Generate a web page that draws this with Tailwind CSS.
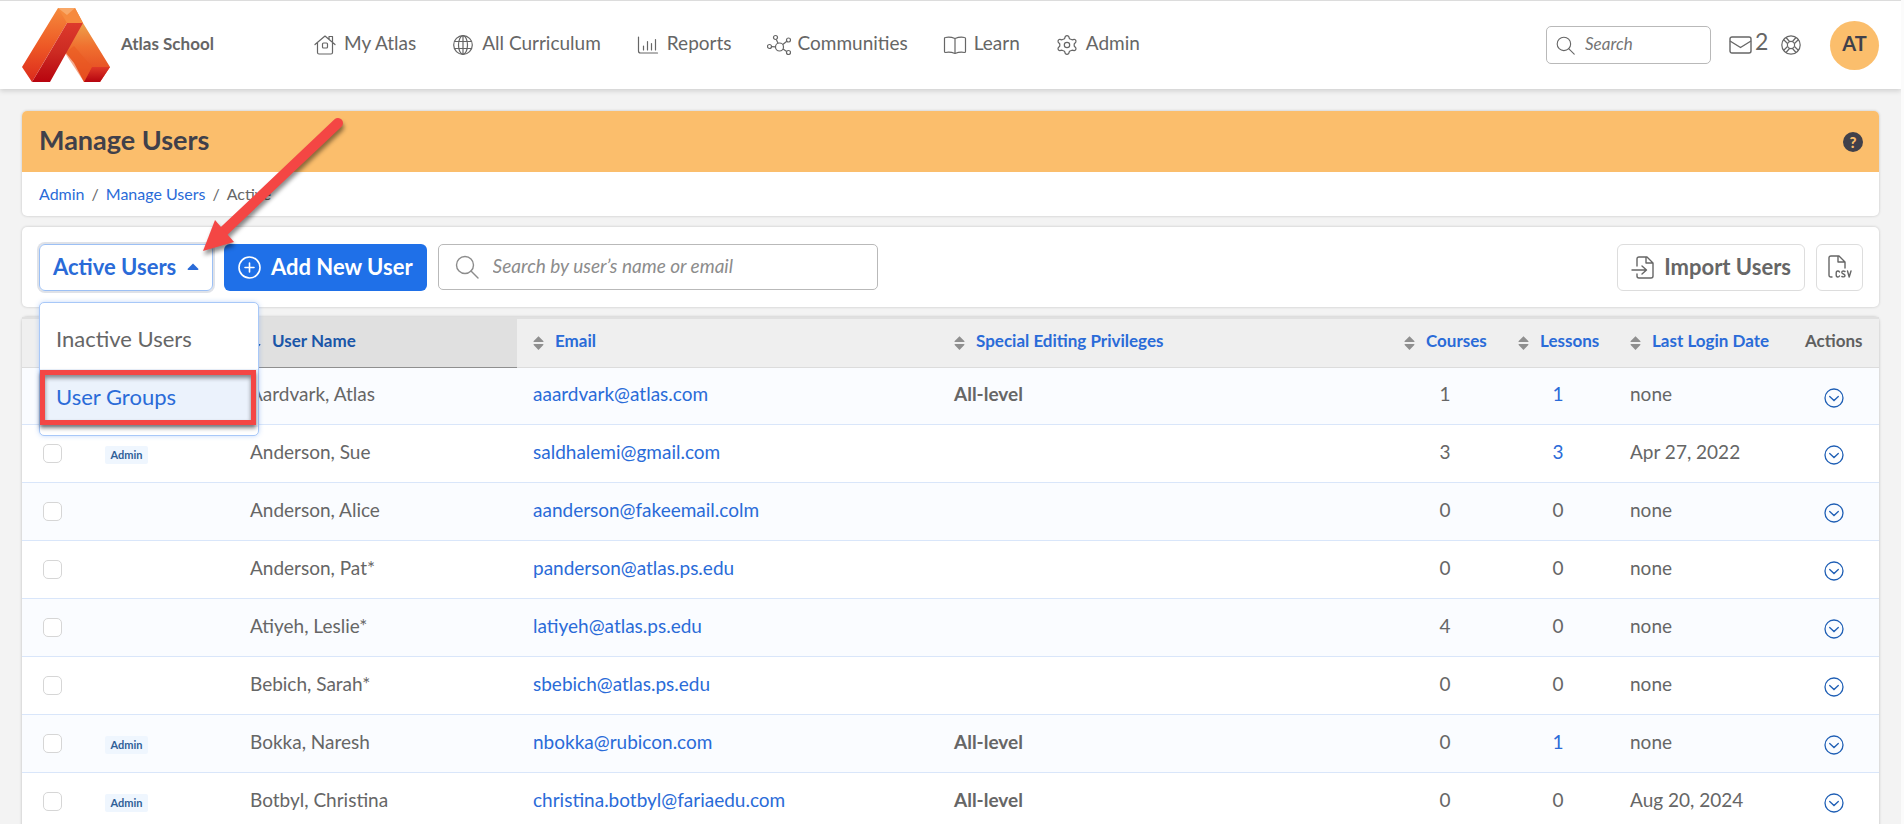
<!DOCTYPE html>
<html lang="en">
<head>
    <meta charset="UTF-8">
    <meta name="viewport" content="width=device-width, initial-scale=1.0">
    <title>Manage Users</title>
    <script src="https://cdn.jsdelivr.net/npm/@tailwindcss/browser@4"></script>
</head>
<body class="h-screen overflow-hidden bg-[#f3f3f3] border-r-3 border-[#fbfbfb] font-['Lato',sans-serif] text-[#666666]">
    <!-- icons used more than once -->
    <svg class="hidden">
        <symbol id="sort" viewBox="0 0 12 16"><path d="M6 0.500 L11.500 6 Q11.500 7 10.500 7 L1.500 7 Q0.500 7 0.500 6 Z M6 15.500 L11.500 10 Q11.500 9 10.500 9 L1.500 9 Q0.500 9 0.500 10 Z" fill="#8f8f8f"/></symbol>
        <symbol id="sorted" viewBox="0 0 12 16"><path d="M6 15.500 L11.500 10 Q11.500 9 10.500 9 L1.500 9 Q0.500 9 0.500 10 Z" fill="#1a56a8"/></symbol>
        <symbol id="more" viewBox="0 0 20 20"><circle cx="10" cy="10" r="9" fill="none" stroke="#1f5fb5" stroke-width="1.300"/><path d="M5.700 8.500 10 12.500 14.300 8.500" fill="none" stroke="#1f5fb5" stroke-width="1.300" stroke-linecap="round"/></symbol>
        <symbol id="lens" viewBox="0 0 24 24"><circle cx="10" cy="10" r="8.500" fill="none" stroke="currentColor" stroke-width="1.400"/><path d="M16 16 23 23" stroke="currentColor" stroke-width="1.400" stroke-linecap="round"/></symbol>
    </svg>

    <header class="relative flex items-center h-[89px] bg-white border-t border-[#dcdcdc] px-[22px] shadow-[0_2px_5px_rgba(0,0,0,0.15)]">
        <a href="#" class="flex items-center gap-[11px] w-[291px]">
            <svg class="w-[88px] h-[74px]" viewBox="0 0 88 74">
                <defs>
                    <linearGradient id="g1" x1="0" y1="0" x2="0" y2="1"><stop offset="0" stop-color="#f58a3c"/><stop offset="0.500" stop-color="#ee5a26"/><stop offset="1" stop-color="#dc2a1c"/></linearGradient>
                    <linearGradient id="g2" x1="0" y1="0" x2="0" y2="1"><stop offset="0" stop-color="#dd3a2c"/><stop offset="0.500" stop-color="#cc2a22"/><stop offset="1" stop-color="#b8040f"/></linearGradient>
                    <linearGradient id="g3" x1="0" y1="0" x2="0" y2="1"><stop offset="0" stop-color="#eda24c"/><stop offset="0.400" stop-color="#f0702f"/><stop offset="1" stop-color="#e2401f"/></linearGradient>
                    <linearGradient id="g4" x1="0" y1="0" x2="0" y2="1"><stop offset="0" stop-color="#e03a28"/><stop offset="1" stop-color="#b5040f"/></linearGradient>
                </defs>
                <path d="M61 15 88 59 78 74H62L52 55 44 45V29Z" fill="url(#g3)"/>
                <path d="M70 59H88L78 74H62Z" fill="url(#g4)"/>
                <path d="M52 38 70 59 62 74 43 45Z" fill="#e9571f" opacity="0.500"/>
                <path d="M36 0H53L61 15H45L10 74 0 59Z" fill="url(#g1)"/>
                <path d="M36 0H53L61 15H45Z" fill="#f68a3e"/>
                <path d="M36 0H53L45 7Z" fill="#f9a868"/>
                <path d="M45 15H61L28 74H10L19 59Z" fill="url(#g2)"/>
            </svg>
            <span class="text-[17px] font-bold pb-0.5">Atlas School</span>
        </a>
        <nav class="flex items-center gap-[35px] text-[19px] mb-1">
            <a href="#" class="flex items-center gap-[7px]">
                <svg class="w-6 h-6 mt-1" viewBox="0 0 24 24" fill="none" stroke="currentColor" stroke-width="1.200" stroke-linecap="round" stroke-linejoin="round"><path d="M2 11.500 12 3 22 11.500M4.500 10V19.500Q4.500 21 6 21H18Q19.500 21 19.500 19.500V10M16 6V3.500H19.500V9"/><rect x="9.500" y="10" width="5" height="5" rx="1"/></svg>
                My Atlas
            </a>
            <a href="#" class="flex items-center gap-[7px]">
                <svg class="w-6 h-6 mt-1" viewBox="0 0 24 24" fill="none" stroke="currentColor" stroke-width="1.200"><circle cx="12" cy="12" r="9.300"/><ellipse cx="12" cy="12" rx="4.500" ry="9.300"/><path d="M3.500 8.500H20.500M3.500 15.500H20.500M12 3V21"/></svg>
                All Curriculum
            </a>
            <a href="#" class="flex items-center gap-[7px]">
                <svg class="w-6 h-6 mt-1" viewBox="0 0 24 24" fill="none" stroke="currentColor" stroke-width="1.200" stroke-linecap="round"><path d="M2.500 4V18Q2.500 20 4.500 20H21.500M7.500 13V17M11.500 8.500V17M15.500 10.500V17M19.500 6.500V17"/></svg>
                Reports
            </a>
            <a href="#" class="flex items-center gap-[7px]">
                <svg class="w-6 h-6 mt-1" viewBox="0 0 24 24" fill="none" stroke="currentColor" stroke-width="1.200"><circle cx="12.500" cy="14" r="4"/><circle cx="8.500" cy="4.500" r="2"/><circle cx="21.500" cy="7" r="2"/><circle cx="2.500" cy="13.500" r="2"/><circle cx="21.500" cy="19.500" r="2"/><path d="M9.300 6.400 11 10.300M19.800 8.200 15.800 11.500M4.500 13.600 8.500 13.800M16 16 19.700 18.500"/></svg>
                Communities
            </a>
            <a href="#" class="flex items-center gap-[7px]">
                <svg class="w-6 h-6 mt-1" viewBox="0 0 24 24" fill="none" stroke="currentColor" stroke-width="1.200" stroke-linejoin="round"><path d="M12 5.500Q7 3.500 2.500 4.500Q1.500 4.500 1.500 5.500V18.500Q1.500 19.500 2.500 19.500Q7 18.500 12 20.500Q17 18.500 21.500 19.500Q22.500 19.500 22.500 18.500V5.500Q22.500 4.500 21.500 4.500Q17 3.500 12 5.500V20.500"/></svg>
                Learn
            </a>
            <a href="#" class="flex items-center gap-[7px]">
                <svg class="w-6 h-6 mt-1" viewBox="0 0 24 24" fill="none" stroke="currentColor" stroke-width="1.200" stroke-linejoin="round"><circle cx="12" cy="12" r="2.700"/><path d="M10.300 3.500Q12 1.800 13.700 3.500L14.500 5.800 17 6.800 19.200 6.300Q21.500 7 20.800 9.200L19.200 11V13L20.800 14.800Q21.500 17 19.200 17.700L17 17.200 14.500 18.200 13.700 20.500Q12 22.200 10.300 20.500L9.500 18.200 7 17.200 4.800 17.700Q2.500 17 3.200 14.800L4.800 13V11L3.200 9.200Q2.500 7 4.800 6.300L7 6.800 9.500 5.800Z"/></svg>
                Admin
            </a>
        </nav>
        <div class="flex items-center ml-auto">
            <label class="flex items-center gap-[10px] w-[165px] h-[38px] border border-[#b9b9b9] rounded-[5px] pl-[9px]">
                <svg class="w-[19px] h-[19px] shrink-0"><use href="#lens"/></svg>
                <input type="text" placeholder="Search" aria-label="Search" class="w-full min-w-0 text-[17px] outline-none italic placeholder:text-[#757575] pb-0.5">
            </label>
            <a href="#" class="flex items-center gap-[3px] ml-[18px]" aria-label="Messages">
                <svg class="w-[23px] h-[18px]" viewBox="0 0 23 18" fill="none" stroke="currentColor" stroke-width="1.400" stroke-linejoin="round"><rect x="1" y="1" width="21" height="16" rx="2"/><path d="M1 5 11.500 11.500 22 5"/></svg>
                <span class="w-3 text-[23px] leading-6 mb-2">2</span>
            </a>
            <a href="#" class="ml-[14px]" aria-label="Help">
                <svg class="w-5 h-5" viewBox="0 0 20 20" fill="none" stroke="currentColor" stroke-width="1.200"><circle cx="10" cy="10" r="9.200"/><circle cx="10" cy="10" r="3.600"/><path d="M6.500 8.500 2.500 4.500M8.500 6.500 5 2.500M11.500 6.500 15 2.500M13.500 8.500 17.500 4.500M13.500 11.500 17.500 15.500M11.500 13.500 15 17.500M8.500 13.500 5 17.500M6.500 11.500 2.500 15.500"/></svg>
            </a>
            <button class="ml-[29px] size-[49px] rounded-full bg-[#fbbe6c] text-[20px] font-bold text-[#40404a] pb-1">AT</button>
        </div>
    </header>

    <main class="px-[22px] pt-[22px]">
        <section class="rounded-[5px] bg-white shadow-[0_0_3px_rgba(0,0,0,0.2)] overflow-hidden">
            <div class="flex items-center justify-between h-[61px] bg-[#fbbe6c] pl-[17px] pr-4">
                <h1 class="text-[27px] leading-8 font-bold text-[#40404a] pb-1">Manage Users</h1>
                <button class="size-5 rounded-full bg-[#40404a] text-[#fbbe6c] text-[15px] leading-5 font-black">?</button>
            </div>
            <nav class="flex items-center gap-[7px] h-[44px] px-[17px] text-[16px]">
                <a href="#" class="text-[#2a6bd8]">Admin</a><span>/</span>
                <a href="#" class="text-[#2a6bd8]">Manage Users</a><span>/</span>
                <span>Active</span>
            </nav>
        </section>

        <section class="relative z-10 flex items-center h-[80px] mt-[11px] rounded-[5px] bg-white shadow-[0_0_3px_rgba(0,0,0,0.2)] pl-[17px] pr-4">
            <div class="relative">
                <button class="flex items-center justify-between w-[174px] h-[47px] rounded-[6px] border border-[#9cc0f5] ring-2 ring-[#dfe2e8] px-[13px] text-[22px] font-bold text-[#2a6bd8]">
                    <span class="pb-0.5">Active Users</span>
                    <svg class="w-3 h-2" viewBox="0 0 12 8"><path d="M6 0.500 11.500 6Q11.500 7 10.500 7H1.500Q0.500 7 0.500 6Z" fill="#2a6bd8"/></svg>
                </button>
                <div class="absolute left-0 top-[58px] w-[220px] h-[134px] bg-white border border-[#a8c8f8] rounded-[5px] py-2 text-[22px] shadow-[0_0_5px_rgba(60,130,240,0.3)]">
                    <a href="#" class="flex items-center h-[58px] px-4 pb-0.5">Inactive Users</a>
                    <a href="#" class="flex items-center h-[58px] px-4 pb-0.5 bg-[#ebf2fc] text-[#2a6bd8]">User Groups</a>
                    <span class="absolute left-0 top-[67px] w-[216px] h-[55px] border-5 border-[#f44644] shadow-[0_3px_4px_rgba(0,0,0,0.5),inset_0_3px_4px_rgba(0,0,0,0.45)]"></span>
                </div>
            </div>
            <button class="flex items-center gap-[10px] h-[47px] ml-[11px] px-[14px] rounded-[6px] bg-[#1f70e8] text-white text-[22px] font-bold">
                <svg class="w-[23px] h-[23px]" viewBox="0 0 23 23" fill="none" stroke="currentColor" stroke-width="1.600" stroke-linecap="round"><circle cx="11.500" cy="11.500" r="10.500"/><path d="M11.500 7V16M7 11.500H16"/></svg>
                <span class="pb-0.5">Add New User</span>
            </button>
            <label class="flex items-center gap-[14px] w-[440px] h-[46px] ml-[11px] border border-[#b9b9b9] rounded-[5px] pl-4 text-[#8c8c8c]">
                <svg class="w-[24px] h-[24px] shrink-0"><use href="#lens"/></svg>
                <input type="text" placeholder="Search by user’s name or email" aria-label="Search users" class="w-full min-w-0 text-[19px] italic outline-none placeholder:text-[#8c8c8c] pb-0.5">
            </label>
            <button class="flex items-center gap-[10px] h-[47px] ml-auto px-[13px] rounded-[6px] border border-[#dddddd] text-[22px] font-bold">
                <svg class="w-[23px] h-[23px]" viewBox="0 0 23 23" fill="none" stroke="currentColor" stroke-width="1.400" stroke-linecap="round" stroke-linejoin="round"><path d="M6 10V3Q6 1 8 1H16L22 7V20Q22 22 20 22H8Q6 22 6 20V18M15 1V7H22M1 14H15M11 10 15.500 14 11 18"/></svg>
                <span class="pb-0.5">Import Users</span>
            </button>
            <button class="flex items-center justify-center size-[47px] ml-[11px] rounded-[6px] border border-[#dddddd]" aria-label="Export CSV">
                <svg class="w-[24px] h-[24px]" viewBox="0 0 24 24" fill="none" stroke="currentColor" stroke-width="1.400" stroke-linecap="round" stroke-linejoin="round"><path d="M4 22H3Q1 22 1 20V3Q1 1 3 1H11L17 7V13M10 1V7H17"/><path d="M11.500 17Q11 16 9.800 16Q8.200 16 8.200 18V20Q8.200 22 9.800 22Q11 22 11.500 21M17 16.500Q14 15.300 13.800 17.300Q13.800 18.600 15.500 19Q17 19.500 17 20.800Q16.500 22.500 13.800 21.500M19.500 16 21.200 22 23 16"/></svg>
            </button>
        </section>

        <section class="mt-[10px] rounded-t-[5px] bg-white shadow-[0_0_3px_rgba(0,0,0,0.25)]">
            <table class="w-full table-fixed border-collapse text-left text-[19px]">
                <colgroup>
                    <col class="w-[65px]"><col class="w-[147px]"><col class="w-[283px]"><col class="w-[421px]"><col>
                    <col class="w-[114px]"><col class="w-[112px]"><col class="w-[175px]"><col class="w-[90px]">
                </colgroup>
                <thead class="bg-[#efefef] text-[17px] text-[#2a6bd8] shadow-[inset_0_2px_0_#e0e0e0]">
                    <tr class="h-[50px] border-b border-[#dcdcdc]">
                        <th></th>
                        <th></th>
                        <th class="bg-[#e0e0e0] px-4 border-b border-[#8f8f8f] text-[#1a56a8]"><button class="flex items-center gap-[11px] pb-0.5"><svg class="w-[11px] h-4 mt-1"><use href="#sorted"/></svg>User Name</button></th>
                        <th class="px-4"><button class="flex items-center gap-[11px] pb-0.5"><svg class="w-[11px] h-4 mt-1"><use href="#sort"/></svg>Email</button></th>
                        <th class="px-4"><button class="flex items-center gap-[11px] pb-0.5"><svg class="w-[11px] h-4 mt-1"><use href="#sort"/></svg>Special Editing Privileges</button></th>
                        <th class="px-4"><button class="flex items-center gap-[11px] pb-0.5"><svg class="w-[11px] h-4 mt-1"><use href="#sort"/></svg>Courses</button></th>
                        <th class="px-4"><button class="flex items-center gap-[11px] pb-0.5"><svg class="w-[11px] h-4 mt-1"><use href="#sort"/></svg>Lessons</button></th>
                        <th class="px-4"><button class="flex items-center gap-[11px] pb-0.5"><svg class="w-[11px] h-4 mt-1"><use href="#sort"/></svg>Last Login Date</button></th>
                        <th class="px-4 pb-0.5 text-[#5f5f5f]">Actions</th>
                    </tr>
                </thead>
                <tbody id="users"></tbody>
            </table>
        </section>
    </main>

    <svg class="absolute left-[190px] top-[110px] w-[165px] h-[155px] z-20 pointer-events-none drop-shadow-[1px_4px_2px_rgba(0,0,0,0.45)]" viewBox="190 110 165 155">
        <path d="M338 123 223 232" stroke="#f44644" stroke-width="10" stroke-linecap="round"/>
        <path d="M203 251 215 220 234 242Z" fill="#f44644"/>
    </svg>

    <script>
        // name, email, privileges, courses, lessons, last login, is admin
        const users = [
            ["Aardvark, Atlas", "aaardvark@atlas.com", "All-level", 1, 1, "none", false],
            ["Anderson, Sue", "saldhalemi@gmail.com", "", 3, 3, "Apr 27, 2022", true],
            ["Anderson, Alice", "aanderson@fakeemail.colm", "", 0, 0, "none", false],
            ["Anderson, Pat*", "panderson@atlas.ps.edu", "", 0, 0, "none", false],
            ["Atiyeh, Leslie*", "latiyeh@atlas.ps.edu", "", 4, 0, "none", false],
            ["Bebich, Sarah*", "sbebich@atlas.ps.edu", "", 0, 0, "none", false],
            ["Bokka, Naresh", "nbokka@rubicon.com", "All-level", 0, 1, "none", true],
            ["Botbyl, Christina", "christina.botbyl@fariaedu.com", "All-level", 0, 0, "Aug 20, 2024", true],
        ];
        document.getElementById("users").innerHTML = users.map(([name, email, level, courses, lessons, login, admin]) => `
            <tr class="h-[58px] first:h-[57px] border-b border-[#d9e6fa] odd:bg-[#fafcff]">
                <td class="pl-[21px]"><input type="checkbox" aria-label="Select ${name}" class="block size-[19px] appearance-none rounded-[5px] border border-[#d6d6d6] bg-white"></td>
                <td class="pl-[18px] pt-1">${admin ? '<span class="block w-[43px] rounded-[2px] bg-[#eff6fe] text-center text-[11px] leading-[18px] font-bold text-[#2f5f98]">Admin</span>' : ''}</td>
                <td class="px-4 pb-0.5">${name}</td>
                <td class="px-4 pb-0.5"><a href="#" class="text-[#2a6bd8]">${email}</a></td>
                <td class="px-4 pb-0.5 font-bold">${level}</td>
                <td class="pb-0.5 text-center">${courses}</td>
                <td class="pb-0.5 text-center">${lessons ? `<a href="#" class="text-[#2a6bd8]">${lessons}</a>` : 0}</td>
                <td class="px-4 pb-0.5">${login}</td>
                <td class="pt-1"><button class="block mx-auto size-5" aria-label="Actions for ${name}"><svg class="size-5"><use href="#more"/></svg></button></td>
            </tr>`).join("");
    </script>
</body>
</html>
